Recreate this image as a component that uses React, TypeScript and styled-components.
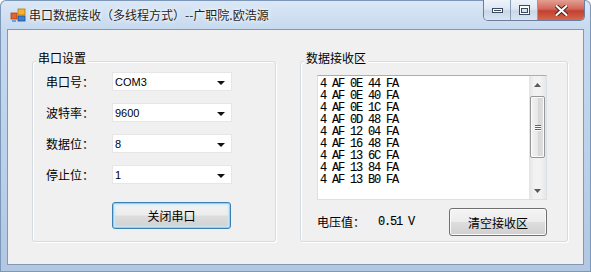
import styled, { createGlobalStyle, css } from "styled-components";

const GlobalStyle = createGlobalStyle`
  html, body {
    margin: 0;
    padding: 0;
    overflow: hidden;
    background: #ffffff;
  }
`;

const UI = `"Noto Sans CJK SC", "Liberation Sans", sans-serif`;
const MONO = `"Liberation Mono", "Noto Sans CJK SC", monospace`;

const Window = styled.div`
  width: 591px;
  height: 272px;
  box-sizing: border-box;
  display: flex;
  flex-direction: column;
  padding: 0 7px 7px 7px;
  background: linear-gradient(180deg, #dbe8f6 0%, #c6d9ee 30px, #bbd0e9 60%, #b1c7e2 100%);
  border-radius: 6px 6px 0 0;
  box-shadow: inset 0 0 0 1px #7d97b8;
  font-family: ${UI};
`;

const TitleBar = styled.div`
  height: 29px;
  display: flex;
  align-items: flex-start;
  padding-left: 3px;
  flex-shrink: 0;
`;

const TitleIcon = styled.svg`
  width: 16px;
  height: 16px;
  margin-top: 7px;
`;

const TitleText = styled.div`
  margin: 6px 0 0 3px;
  font-size: 12px;
  line-height: 18px;
  color: #1e1e1e;
  white-space: nowrap;
  text-shadow: 0 0 6px #ffffff, 0 0 3px #ffffff;
`;

const CaptionButtons = styled.div`
  margin-left: auto;
  margin-right: -1px;
  display: flex;
  height: 20px;
  border: 1px solid #6b7f9c;
  border-top: none;
  border-radius: 0 0 5px 5px;
  overflow: hidden;
`;

const CaptionButton = styled.div<{ $kind: "min" | "max" | "close" }>`
  height: 20px;
  display: flex;
  align-items: center;
  justify-content: center;
  box-sizing: border-box;
  ${(p) =>
    p.$kind === "close"
      ? css`
          width: 46px;
          background: linear-gradient(180deg, #e3a092 0%, #d2665a 45%, #c2402f 55%, #d4684f 100%);
        `
      : css`
          width: 27px;
          border-right: 1px solid #8a9cb6;
          background: linear-gradient(180deg, #eef3fa 0%, #dde7f3 45%, #c9d7e8 55%, #d9e5f2 100%);
        `}
`;

const Client = styled.div`
  flex: 1;
  display: flex;
  align-items: flex-start;
  gap: 24px;
  padding: 31px 0 0 24px;
  background: #f0f0f0;
  border: 1px solid #8498b3;
`;

const Group = styled.div<{ $width: number }>`
  width: ${(p) => p.$width}px;
  height: 181px;
  box-sizing: border-box;
  border: 1px solid #d5dbe0;
  border-radius: 3px;
  box-shadow: inset 1px 1px 0 #ffffff, 1px 1px 0 #ffffff;
  display: flex;
  flex-direction: column;
`;

const GroupTitle = styled.div`
  margin: -11px 0 0 3px;
  padding: 0 2px;
  width: fit-content;
  background: #f0f0f0;
  font-size: 12px;
  line-height: 14px;
  color: #000;
`;

const Fields = styled.div`
  display: flex;
  flex-direction: column;
  gap: 12px;
  margin: 7px 0 0 13px;
`;

const FieldRow = styled.div`
  display: flex;
  align-items: center;
  gap: 22px;
`;

const Label = styled.div`
  width: 44px;
  font-size: 12px;
  line-height: 14px;
  color: #000;
  white-space: nowrap;
`;

const Combo = styled.div`
  width: 120px;
  height: 19px;
  box-sizing: border-box;
  background: #ffffff;
  border: 1px solid #e6e6e6;
  display: flex;
  align-items: center;
  padding: 0 6px 0 2px;
  font-family: "Liberation Sans", sans-serif;
  font-size: 11px;
  color: #000;
`;

const ComboValue = styled.span`
  flex: 1;
`;

const ComboArrow = styled.span`
  width: 0;
  height: 0;
  border-left: 4px solid transparent;
  border-right: 4px solid transparent;
  border-top: 4px solid #111;
  margin-top: 2px;
`;

const ButtonRow = styled.div`
  margin: 18px 0 0 79px;
`;

const Button = styled.div<{ $width: number; $height: number; $focused?: boolean }>`
  width: ${(p) => p.$width}px;
  height: ${(p) => p.$height}px;
  box-sizing: border-box;
  display: flex;
  align-items: center;
  justify-content: center;
  border-radius: 3px;
  font-size: 12px;
  color: #000;
  background: linear-gradient(180deg, #f4f4f4 0%, #ececec 48%, #dddddd 52%, #d0d0d0 100%);
  ${(p) =>
    p.$focused
      ? css`
          border: 1px solid #3c7fb1;
          box-shadow: inset 0 0 0 1px #8fd3f3, inset 0 0 2px 2px #c6ebfb;
        `
      : css`
          border: 1px solid #707070;
          box-shadow: inset 0 0 0 1px #fafafa;
        `}
`;

const TextArea = styled.div`
  margin: 10px 0 0 16px;
  width: 230px;
  height: 125px;
  box-sizing: border-box;
  background: #ffffff;
  border: 1px solid #dbdfe6;
  border-top-color: #abadb3;
  display: flex;
`;

const Lines = styled.div`
  flex: 1;
  padding: 2px 0 0 2px;
  font-family: ${MONO};
  font-size: 12px;
  line-height: 12px;
  letter-spacing: -1.2px;
  color: #000;
  white-space: pre;
  -webkit-text-stroke: 0.12px #000;
`;

const ScrollBar = styled.div`
  width: 17px;
  display: flex;
  flex-direction: column;
  background: linear-gradient(90deg, #e3e3e3, #f2f2f2 30%, #f2f2f2 70%, #e6e6e6);
`;

const ScrollArrow = styled.div`
  height: 17px;
  display: flex;
  align-items: center;
  justify-content: center;
`;

const ScrollTrack = styled.div`
  flex: 1;
  padding: 3px 1px 0 1px;
`;

const Thumb = styled.div`
  height: 62px;
  box-sizing: border-box;
  border: 1px solid #979797;
  border-radius: 2px;
  background: linear-gradient(90deg, #f3f3f3 0%, #e8e8e8 50%, #d6d6d6 51%, #e0e0e0 100%);
  box-shadow: inset 0 0 0 1px #fbfbfb;
  display: flex;
  flex-direction: column;
  align-items: center;
  justify-content: center;
  gap: 1px;
`;

const Grip = styled.div`
  width: 6px;
  height: 1px;
  background: #646464;
  box-shadow: 0 1px 0 #ffffff;
`;

const VoltageRow = styled.div`
  margin: 8px 0 0 16px;
  width: 230px;
  display: flex;
  align-items: center;
`;

const VoltageLabel = styled.div`
  width: 48px;
  font-size: 12px;
  line-height: 14px;
  color: #000;
`;

const VoltageValue = styled.div`
  margin-left: 13px;
  font-family: ${MONO};
  font-size: 12px;
  letter-spacing: -1.2px;
  color: #000;
  -webkit-text-stroke: 0.12px #000;
`;

const Spacer = styled.div`
  flex: 1;
`;

const fields = [
  { label: "串口号：", value: "COM3" },
  { label: "波特率：", value: "9600" },
  { label: "数据位：", value: "8" },
  { label: "停止位：", value: "1" },
];

const received = [
  "4 AF 0E 44 FA",
  "4 AF 0E 40 FA",
  "4 AF 0E 1C FA",
  "4 AF 0D 48 FA",
  "4 AF 12 04 FA",
  "4 AF 16 48 FA",
  "4 AF 13 6C FA",
  "4 AF 13 84 FA",
  "4 AF 13 B0 FA",
];

const AppIcon = () => (
  <TitleIcon viewBox="0 0 16 16">
    <rect x="1" y="6" width="6" height="6" fill="#e8632b" stroke="#a8401a" strokeWidth="0.8" />
    <rect x="8" y="2" width="7" height="6" fill="#f2b233" stroke="#b57a12" strokeWidth="0.8" />
    <rect x="8" y="9" width="7" height="5" fill="#3f7fd0" stroke="#1d4f93" strokeWidth="0.8" />
    <rect x="2" y="13" width="4" height="2" fill="#6aa0de" />
  </TitleIcon>
);

const MinIcon = () => (
  <svg width="11" height="6" viewBox="0 0 11 6">
    <rect x="0.5" y="1.5" width="10" height="4" fill="#ffffff" stroke="#3b4a5e" />
    <rect x="2" y="3" width="7" height="1" fill="#3b4a5e" />
  </svg>
);

const MaxIcon = () => (
  <svg width="11" height="10" viewBox="0 0 11 10">
    <rect x="0.5" y="0.5" width="10" height="9" fill="#ffffff" stroke="#3b4a5e" />
    <rect x="2.5" y="3.5" width="6" height="4" fill="#d7e1ee" stroke="#3b4a5e" />
  </svg>
);

const CloseIcon = () => (
  <svg width="13" height="11" viewBox="0 0 13 11">
    <path d="M1.5 1 L11.5 10 M11.5 1 L1.5 10" stroke="#4a1d18" strokeWidth="4" strokeLinecap="round" />
    <path d="M1.5 1 L11.5 10 M11.5 1 L1.5 10" stroke="#ffffff" strokeWidth="2.2" strokeLinecap="round" />
  </svg>
);

const Arrow = ({ up }: { up?: boolean }) => (
  <svg width="7" height="4" viewBox="0 0 7 4">
    <path d={up ? "M0 4 L3.5 0 L7 4 Z" : "M0 0 L7 0 L3.5 4 Z"} fill="#5a5a5a" />
  </svg>
);

export default function App() {
  return (
    <>
      <GlobalStyle />
      <Window>
        <TitleBar>
          <AppIcon />
          <TitleText>串口数据接收（多线程方式）--广职院.欧浩源</TitleText>
          <CaptionButtons>
            <CaptionButton $kind="min">
              <MinIcon />
            </CaptionButton>
            <CaptionButton $kind="max">
              <MaxIcon />
            </CaptionButton>
            <CaptionButton $kind="close">
              <CloseIcon />
            </CaptionButton>
          </CaptionButtons>
        </TitleBar>
        <Client>
          <Group $width={244}>
            <GroupTitle>串口设置</GroupTitle>
            <Fields>
              {fields.map((f) => (
                <FieldRow key={f.label}>
                  <Label>{f.label}</Label>
                  <Combo>
                    <ComboValue>{f.value}</ComboValue>
                    <ComboArrow />
                  </Combo>
                </FieldRow>
              ))}
            </Fields>
            <ButtonRow>
              <Button $width={119} $height={27} $focused>
                关闭串口
              </Button>
            </ButtonRow>
          </Group>
          <Group $width={268}>
            <GroupTitle>数据接收区</GroupTitle>
            <TextArea>
              <Lines>{received.join("\n")}</Lines>
              <ScrollBar>
                <ScrollArrow>
                  <Arrow up />
                </ScrollArrow>
                <ScrollTrack>
                  <Thumb>
                    <Grip />
                    <Grip />
                    <Grip />
                  </Thumb>
                </ScrollTrack>
                <ScrollArrow>
                  <Arrow />
                </ScrollArrow>
              </ScrollBar>
            </TextArea>
            <VoltageRow>
              <VoltageLabel>电压值：</VoltageLabel>
              <VoltageValue>0.51 V</VoltageValue>
              <Spacer />
              <Button $width={98} $height={28}>
                清空接收区
              </Button>
            </VoltageRow>
          </Group>
        </Client>
      </Window>
    </>
  );
}
